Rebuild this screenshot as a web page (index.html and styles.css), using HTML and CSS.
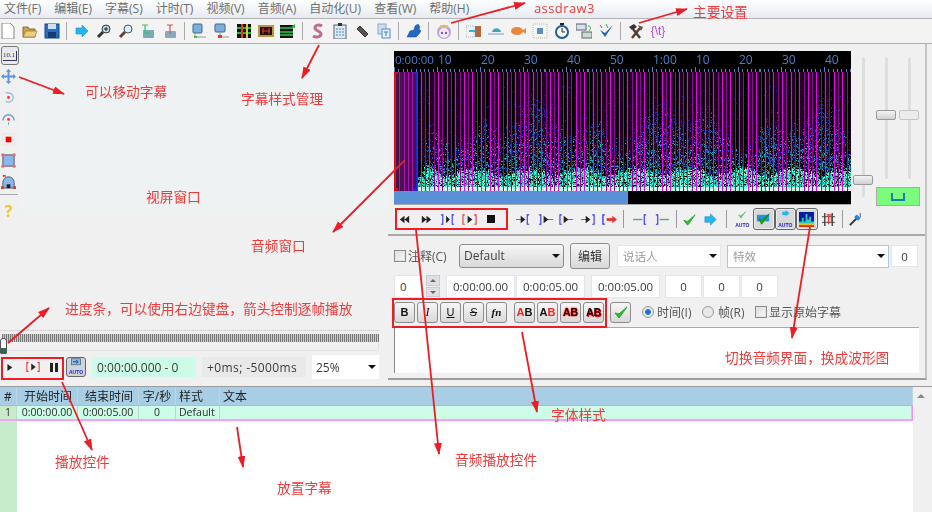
FILE: index.html
```html
<!DOCTYPE html>
<html lang="zh-CN">
<head>
<meta charset="utf-8">
<title>Aegisub</title>
<link rel="stylesheet" href="styles.css">
</head>
<body>
<svg class="defs" width="0" height="0">
  <defs>
    <symbol id="play" viewBox="0 0 16 16"><path d="M5 3l7 5-7 5z" fill="#222"/></symbol>
    <symbol id="rew" viewBox="0 0 16 16"><path d="M8 4L3 8l5 4zM13 4L8 8l5 4z" fill="#222"/></symbol>
    <symbol id="ffw" viewBox="0 0 16 16"><path d="M3 4l5 4-5 4zM8 4l5 4-5 4z" fill="#222"/></symbol>
    <symbol id="bplay" viewBox="0 0 16 16"><path d="M6 4l5 4-5 4z" fill="#222"/><path d="M3 3H1v10h2M13 3h2v10h-2" fill="none" stroke="#e33" stroke-width="1.2"/></symbol>
    <symbol id="bout" viewBox="0 0 16 16"><path d="M6.500 4l4 4-4 4z" fill="#222"/><path d="M1 3h2v10H1M15 3h-2v10h2" fill="none" stroke="#33f" stroke-width="1.200"/></symbol>
    <symbol id="ibef" viewBox="0 0 16 16"><path d="M0 8h6" stroke="#e33"/><path d="M5 4l5 4-5 4z" fill="#222"/><path d="M14 3h-2v10h2" fill="none" stroke="#33f" stroke-width="1.200"/></symbol>
    <symbol id="iaft" viewBox="0 0 16 16"><path d="M10 8h6" stroke="#e33"/><path d="M6 4l5 4-5 4z" fill="#222"/><path d="M1 3h2v10H1" fill="none" stroke="#33f" stroke-width="1.200"/></symbol>
    <symbol id="ista" viewBox="0 0 16 16"><path d="M9 8h6" stroke="#e33"/><path d="M5 4l5 4-5 4z" fill="#222"/><path d="M3 3H1v10h2" fill="none" stroke="#33f" stroke-width="1.200"/></symbol>
    <symbol id="iend" viewBox="0 0 16 16"><path d="M0 8h6" stroke="#e33"/><path d="M5 4l5 4-5 4z" fill="#222"/><path d="M12 3h2v10h-2" fill="none" stroke="#33f" stroke-width="1.200"/></symbol>
    <symbol id="iall" viewBox="0 0 16 16"><path d="M5 8h7" stroke="#e33" stroke-width="3"/><path d="M11 4l5 4-5 4z" fill="#e33"/><path d="M3 3H1v10h2" fill="none" stroke="#33f" stroke-width="1.400"/></symbol>
    <symbol id="gl" viewBox="0 0 16 16"><path d="M0 8h10" stroke="#6a6" stroke-width="1.500"/><path d="M14 3h-2v10h2" fill="none" stroke="#33f" stroke-width="1.200"/></symbol>
    <symbol id="gr" viewBox="0 0 16 16"><path d="M6 8h10" stroke="#6a6" stroke-width="1.500"/><path d="M2 3h2v10H2" fill="none" stroke="#33f" stroke-width="1.200"/></symbol>
    <symbol id="check" viewBox="0 0 16 16"><path d="M2 9l4 5 8-11-8 7z" fill="#3b3" stroke="#2a2"/></symbol>
    <symbol id="arrow" viewBox="0 0 16 16"><path d="M2 5h6V2l6 6-6 6v-3H2z" fill="#28b4ee" stroke="#1890c8" stroke-width=".6"/></symbol>
    <symbol id="zin" viewBox="0 0 16 16"><path d="M2 14l5-5" stroke="#333" stroke-width="3"/><circle cx="10" cy="6" r="4" fill="#bde" stroke="#333"/><path d="M8 6h4M10 4v4" stroke="#222"/></symbol>
    <symbol id="zout" viewBox="0 0 16 16"><path d="M2 14l5-5" stroke="#643" stroke-width="3"/><circle cx="10" cy="6" r="4" fill="#def" stroke="#456"/></symbol>
    <symbol id="jump1" viewBox="0 0 16 16"><rect x="3" y="7" width="11" height="8" rx="1" fill="#7ab"/><path d="M2 2h6M5 2v8h5" stroke="#4b6" stroke-width="1.200" fill="none"/></symbol>
    <symbol id="jump2" viewBox="0 0 16 16"><rect x="3" y="8" width="11" height="7" rx="1" fill="#8ab"/><path d="M5 2h6M8 2v9" stroke="#d55" stroke-width="1.200" fill="none"/></symbol>
    <symbol id="flow1" viewBox="0 0 16 16"><rect x="1" y="1" width="9" height="9" rx="1" fill="#7ab0dd" stroke="#468"/><path d="M3 10v4h11" stroke="#999" fill="none"/><rect x="2" y="13" width="3" height="2" fill="#3c3"/></symbol>
    <symbol id="flow2" viewBox="0 0 16 16"><rect x="1" y="1" width="10" height="8" rx="1" fill="#7ab0dd" stroke="#468"/><path d="M6 9v5h9" stroke="#999" fill="none"/><rect x="4" y="12" width="4" height="3" fill="#e33"/></symbol>
    <symbol id="film1" viewBox="0 0 16 16"><rect x="1" y="1" width="14" height="14" fill="#111"/><path d="M1 5h14M1 10h14" stroke="#2b2" stroke-width="2"/><path d="M6 1v14" stroke="#e33" stroke-width="2"/><path d="M11 1v14" stroke="#dc3" stroke-width="2"/></symbol>
    <symbol id="film2" viewBox="0 0 16 16"><rect y="2" width="16" height="12" fill="#b8983a"/><rect x="2" y="4" width="12" height="8" fill="#211"/><path d="M4 8h8M5 5v6M11 5v6" stroke="#e33"/></symbol>
    <symbol id="film3" viewBox="0 0 16 16"><rect y="2" width="13" height="13" fill="#111"/><path d="M0 5h13M0 9h13M0 12h13" stroke="#2c5" stroke-width="1.500"/><path d="M11 4l4-3v4z" fill="#3a3"/></symbol>
    <symbol id="sty" viewBox="0 0 16 16"><path d="M12 3c-3-2-7-1-7 2s6 3 6 6-5 4-8 2" fill="none" stroke="#c26a8c" stroke-width="3"/></symbol>
    <symbol id="clip" viewBox="0 0 16 16"><rect x="2" y="2" width="12" height="14" fill="#dfe9f3" stroke="#567"/><rect x="6" y="0" width="4" height="3" fill="#333"/><path d="M4 6h8M4 9h8M4 12h8" stroke="#48a" stroke-dasharray="2 1"/></symbol>
    <symbol id="tag" viewBox="0 0 16 16"><path d="M3 6l3-3 8 8-3 3z" fill="#555" stroke="#333"/></symbol>
    <symbol id="docs" viewBox="0 0 16 16"><rect x="2" y="1" width="8" height="10" fill="#cde" stroke="#8ac"/><rect x="6" y="6" width="8" height="9" fill="#def" stroke="#68b"/><path d="M8 9h4M10 9v4" stroke="#48a"/></symbol>
    <symbol id="puz" viewBox="0 0 16 16"><path d="M1 14l3-6 4-1 1-4 3-2 2 3-1 2 2 2-2 3-3 3z" fill="#2469c4" stroke="#124a90" stroke-width=".5"/></symbol>
    <symbol id="face" viewBox="0 0 16 16"><circle cx="8" cy="9" r="7" fill="#b9a2e8"/><circle cx="8" cy="10" r="5" fill="#fce8e2"/><circle cx="6" cy="10" r="1.200" fill="#66c"/><circle cx="10" cy="10" r="1.200" fill="#66c"/><path d="M4 2l4 2 4-2v3H4z" fill="#e8c23a"/></symbol>
    <symbol id="kar1" viewBox="0 0 16 16"><rect x="0" y="3" width="8" height="11" fill="none" stroke="#9bd" stroke-dasharray="1 1"/><rect x="9" y="3" width="6" height="11" fill="#b4693a"/><path d="M3 8h6" stroke="#28b4ee" stroke-width="2"/></symbol>
    <symbol id="fish1" viewBox="0 0 16 16"><path d="M0 11h16" stroke="#9bd" stroke-width="1.500"/><path d="M4 9c1-5 8-5 9 0z" fill="#3aa8b8"/></symbol>
    <symbol id="fish2" viewBox="0 0 16 16"><ellipse cx="7" cy="8" rx="6" ry="4" fill="#e8863a"/><path d="M12 8l4-3v6z" fill="#e8863a"/></symbol>
    <symbol id="sq" viewBox="0 0 16 16"><rect x="1" y="1" width="14" height="14" fill="none" stroke="#bbb" stroke-dasharray="1 1"/><rect x="5" y="5" width="6" height="6" fill="#5a8cc8"/></symbol>
    <symbol id="timer" viewBox="0 0 16 16"><circle cx="8" cy="9" r="6" fill="#fff" stroke="#1c5c9c" stroke-width="2"/><path d="M8 9V5M8 9h3" stroke="#123"/><rect x="6" y="0" width="4" height="2" fill="#222"/></symbol>
    <symbol id="trans" viewBox="0 0 16 16"><rect x="0" y="1" width="10" height="6" fill="#dde" stroke="#567"/><rect x="6" y="9" width="10" height="6" fill="#cdc" stroke="#567"/><path d="M12 3c3 0 3 3 1 5" stroke="#3a3" fill="none"/></symbol>
    <symbol id="spell" viewBox="0 0 16 16"><path d="M2 7l5 7 8-12-8 8z" fill="#1e66b8"/><path d="M2 2l2 3" stroke="#e33"/><path d="M8 1l2 4" stroke="#3a3"/></symbol>
    <symbol id="tools" viewBox="0 0 16 16"><path d="M4 15L12 5" stroke="#6b3d1c" stroke-width="2.500"/><path d="M12 15L5 6" stroke="#444" stroke-width="2.500"/><path d="M1 4l5-3 3 3-5 3z" fill="#333"/><path d="M10 2l5 2-2 4z" fill="#555"/></symbol>
    <symbol id="autochk" viewBox="0 0 16 16"><path d="M3 6l3 4 6-8-6 5z" fill="#6c6" stroke="#5a5" stroke-width=".5"/></symbol>
    <symbol id="chkblue" viewBox="0 0 16 16"><rect x="1" y="3" width="13" height="7" fill="#2f8fd8"/><path d="M3 7l3 6 8-11-8 7z" fill="#2a2" stroke="#181"/></symbol>
    <symbol id="arrauto" viewBox="0 0 16 16"><path d="M4 2h4V0l5 4-5 4V6H4z" fill="#28b4ee"/></symbol>
    <symbol id="spectrum" viewBox="0 0 16 16"><rect width="16" height="16" fill="#0a1c9c"/><path d="M0 16V10h3V6h2v4h2V2h2v6h2V5h2v5h3v6z" fill="#2ac8c0"/><rect y="12" width="16" height="4" fill="#e8c020"/><rect y="14" width="16" height="2" fill="#e03020"/></symbol>
    <symbol id="split" viewBox="0 0 16 16"><path d="M4 1v14M12 1v14" stroke="#444" stroke-width="1.500"/><path d="M1 5h14M1 11h14" stroke="#444"/><path d="M8 3v10M6 3h5v8" fill="none" stroke="#e33" stroke-width="1.300"/></symbol>
    <symbol id="mic" viewBox="0 0 16 16"><path d="M2 14l8-8" stroke="#333" stroke-width="2"/><path d="M8 4l4 4" stroke="#28d" stroke-width="4"/><path d="M13 1v5" stroke="#555"/></symbol>
    <symbol id="autob" viewBox="0 0 16 16"><rect x="2" y="1" width="12" height="8" fill="#8cc0ee" stroke="#468"/><path d="M4 5h5M8 3l3 2-3 2" stroke="#124" fill="none"/></symbol>
  </defs>
</svg>

<div class="app">
  <div class="menubar">
    <span class="menu m1">文件(F)</span><span class="menu">编辑(E)</span><span class="menu">字幕(S)</span><span class="menu">计时(T)</span><span class="menu">视频(V)</span><span class="menu">音频(A)</span><span class="menu">自动化(U)</span><span class="menu">查看(W)</span><span class="menu">帮助(H)</span>
  </div>

  <div class="toolbar">
    <span class="tb first"><svg class="ic" viewBox="0 0 16 16"><path d="M2 0h8l4 4v12H2z" fill="#fff" stroke="#888"/></svg></span>
    <span class="tb"><svg class="ic" viewBox="0 0 16 16"><path d="M1 4h5l1 2h6v8H1z" fill="#c9a34a" stroke="#8a6d2c"/><path d="M4 8h11l-2 6H1z" fill="#e9d080" stroke="#8a6d2c" stroke-width=".6"/></svg></span>
    <span class="tb"><svg class="ic" viewBox="0 0 16 16"><rect x="1" y="1" width="14" height="14" fill="#2a6ec0" stroke="#144a90"/><rect x="4" y="1" width="8" height="5" fill="#cfe0f4"/><rect x="4" y="9" width="8" height="6" fill="#123c74"/></svg></span>
    <i class="sep"></i>
    <span class="tb"><svg class="ic"><use href="#arrow"/></svg></span>
    <span class="tb"><svg class="ic"><use href="#zin"/></svg></span>
    <span class="tb"><svg class="ic"><use href="#zout"/></svg></span>
    <span class="tb"><svg class="ic"><use href="#jump1"/></svg></span>
    <span class="tb"><svg class="ic"><use href="#jump2"/></svg></span>
    <i class="sep"></i>
    <span class="tb"><svg class="ic"><use href="#flow1"/></svg></span>
    <span class="tb"><svg class="ic"><use href="#flow2"/></svg></span>
    <span class="tb"><svg class="ic"><use href="#film1"/></svg></span>
    <span class="tb"><svg class="ic"><use href="#film2"/></svg></span>
    <span class="tb"><svg class="ic"><use href="#film3"/></svg></span>
    <i class="sep"></i>
    <span class="tb"><svg class="ic"><use href="#sty"/></svg></span>
    <span class="tb"><svg class="ic"><use href="#clip"/></svg></span>
    <span class="tb"><svg class="ic"><use href="#tag"/></svg></span>
    <span class="tb"><svg class="ic"><use href="#docs"/></svg></span>
    <i class="sep"></i>
    <span class="tb"><svg class="ic"><use href="#puz"/></svg></span>
    <i class="sep"></i>
    <span class="tb"><svg class="ic"><use href="#face"/></svg></span>
    <i class="sep"></i>
    <span class="tb"><svg class="ic"><use href="#kar1"/></svg></span>
    <span class="tb"><svg class="ic"><use href="#fish1"/></svg></span>
    <span class="tb"><svg class="ic"><use href="#fish2"/></svg></span>
    <span class="tb"><svg class="ic"><use href="#sq"/></svg></span>
    <span class="tb"><svg class="ic"><use href="#timer"/></svg></span>
    <span class="tb"><svg class="ic"><use href="#trans"/></svg></span>
    <span class="tb"><svg class="ic"><use href="#spell"/></svg></span>
    <i class="sep"></i>
    <span class="tb"><svg class="ic"><use href="#tools"/></svg></span>
    <span class="tb tag-t">{\t}</span>
  </div>

  <div class="workspace">
    <section class="left">
      <div class="video-row">
        <div class="tools">
          <span class="tool pressed"><span class="ruler-txt">10.1</span></span>
          <span class="tool"><svg class="ic" viewBox="0 0 16 16"><path d="M8 0l3 3H9v4h4V5l3 3-3 3V9H9v4h2l-3 3-3-3h2V9H3v2L0 8l3-3v2h4V3H5z" fill="#5a94dc"/></svg></span>
          <span class="tool"><svg class="ic" viewBox="0 0 16 16"><path d="M5 3h3a5 5 0 1 1-3 9" fill="none" stroke="#8ab4e4" stroke-width="1.300"/><circle cx="8" cy="8" r="1.500" fill="#e33"/></svg></span>
          <span class="tool"><svg class="ic" viewBox="0 0 16 16"><path d="M2 10a6 6 0 0 1 12 0" fill="none" stroke="#6a9ad8" stroke-width="1.500"/><circle cx="8" cy="9" r="1.500" fill="#e33"/><path d="M8 12v3" stroke="#8ab"/></svg></span>
          <span class="tool"><svg class="ic" viewBox="0 0 16 16"><rect x="2" y="2" width="12" height="12" fill="none" stroke="#ddd" stroke-dasharray="1 1"/><rect x="5" y="5" width="6" height="6" fill="#f00"/></svg></span>
          <span class="tool"><svg class="ic" viewBox="0 0 16 16"><rect x="2" y="2" width="12" height="12" fill="#8ab8ec" stroke="#556"/><g fill="#f06a6a"><circle cx="2" cy="2" r="1.800"/><circle cx="14" cy="2" r="1.800"/><circle cx="2" cy="14" r="1.800"/><circle cx="14" cy="14" r="1.800"/></g></svg></span>
          <span class="tool"><svg class="ic" viewBox="0 0 16 16"><path d="M2 15V9a6 6 0 0 1 12 0v6z" fill="#8ab8ec" stroke="#456"/><rect x="6" y="11" width="4" height="4" fill="#223"/><g fill="#e33"><rect x="0" y="13" width="3" height="3"/><rect x="13" y="13" width="3" height="3"/><rect x="2" y="1" width="3" height="2"/></g></svg></span>
          <i class="tool-sep"></i>
          <span class="tool help">?</span>
        </div>
        <div class="video"></div>
      </div>
      <div class="seek">
        <div class="seek-line"></div>
        <div class="seek-ticks"></div>
        <div class="seek-track"><span class="thumb"></span></div>
      </div>
      <div class="vctrl">
        <span class="vb vplay"><svg class="ic sm"><use href="#play"/></svg></span>
        <span class="vb"><svg class="ic sm"><use href="#bplay"/></svg></span>
        <span class="vb"><span class="pause"></span></span>
        <span class="autobtn"><svg class="ic sm"><use href="#autob"/></svg><b class="auto">AUTO</b></span>
        <span class="field mint">0:00:00.000 - 0</span>
        <span class="field grey">+0ms; -5000ms</span>
        <span class="field combo zoomc">25%<i class="caret"></i></span>
      </div>
    </section>

    <section class="right">
      <div class="audio">
        <div class="audio-top">
          <div class="wave">
            <div class="timeline">
              <span class="t0">0:00:00</span><span>10</span><span>20</span><span>30</span><span>40</span><span>50</span><span>1:00</span><span>10</span><span>20</span><span>30</span><span>40</span>
            </div>
            <canvas id="spec" class="spec" width="457" height="119"></canvas>
            <div class="overview"><span class="ov-done"></span><span class="ov-rest"></span></div>
          </div>
          <div class="sliders">
            <div class="slide s1"><span class="sthumb"></span></div>
            <div class="slide-group">
              <div class="slide-pair">
                <div class="slide s2"><span class="sthumb"></span></div>
                <div class="slide s3"><span class="sthumb lite"></span></div>
              </div>
              <div class="greenbox"><span class="bracket"></span></div>
            </div>
          </div>
        </div>
        <div class="atb">
          <span class="ab"><svg class="ic"><use href="#rew"/></svg></span>
          <span class="ab"><svg class="ic"><use href="#ffw"/></svg></span>
          <span class="ab"><svg class="ic"><use href="#bout"/></svg></span>
          <span class="ab"><svg class="ic"><use href="#bplay"/></svg></span>
          <span class="ab"><span class="stop"></span></span>
          <i class="gap1"></i>
          <span class="ab"><svg class="ic"><use href="#ibef"/></svg></span>
          <span class="ab"><svg class="ic"><use href="#iaft"/></svg></span>
          <span class="ab"><svg class="ic"><use href="#ista"/></svg></span>
          <span class="ab"><svg class="ic"><use href="#iend"/></svg></span>
          <span class="ab"><svg class="ic"><use href="#iall"/></svg></span>
          <i class="vsep s12"></i>
          <span class="ab"><svg class="ic"><use href="#gl"/></svg></span>
          <span class="ab"><svg class="ic"><use href="#gr"/></svg></span>
          <i class="vsep s5"></i>
          <span class="ab"><svg class="ic"><use href="#check"/></svg></span>
          <span class="ab"><svg class="ic"><use href="#arrow"/></svg></span>
          <i class="vsep s14"></i>
          <span class="ab stack"><svg class="ic"><use href="#autochk"/></svg><b class="auto">AUTO</b></span>
          <span class="ab on"><svg class="ic"><use href="#chkblue"/></svg></span>
          <span class="ab on stack"><svg class="ic"><use href="#arrauto"/></svg><b class="auto">AUTO</b></span>
          <span class="ab on"><svg class="ic"><use href="#spectrum"/></svg></span>
          <span class="ab"><svg class="ic"><use href="#split"/></svg></span>
          <i class="vsep s5"></i>
          <span class="ab"><svg class="ic"><use href="#mic"/></svg></span>
        </div>
      </div>

      <div class="edit">
        <div class="row r1">
          <span class="check"></span><span class="lab w-note">注释(C)</span>
          <span class="dd w-style">Default<i class="caret"></i></span>
          <span class="btn w-edit">编辑</span>
          <span class="field combo w-actor ph">说话人<i class="caret"></i></span>
          <span class="field combo w-fx ph">特效<i class="caret"></i></span>
          <span class="field w-lay center">0</span>
        </div>
        <div class="row r2">
          <span class="field w-layer">0</span>
          <span class="spin"><i class="up"></i><i class="down"></i></span>
          <span class="field w-time center">0:00:00.00</span>
          <span class="field w-time center t2">0:00:05.00</span>
          <span class="field w-time center t3">0:00:05.00</span>
          <span class="field w-m center m1st">0</span>
          <span class="field w-m center">0</span>
          <span class="field w-m center">0</span>
        </div>
        <div class="row r3">
          <span class="sb bold">B</span>
          <span class="sb ital">I</span>
          <span class="sb und">U</span>
          <span class="sb strike">S</span>
          <span class="sb fn">fn</span>
          <span class="sb ab1 gapl"><em>A</em>B</span>
          <span class="sb ab1">A<em>B</em></span>
          <span class="sb ab3">AB</span>
          <span class="sb ab4">AB</span>
          <span class="sb okb"><svg class="ic"><use href="#check"/></svg></span>
          <span class="radio on"></span><span class="lab w-rt">时间(I)</span>
          <span class="radio"></span><span class="lab w-rf">帧(R)</span>
          <span class="check"></span><span class="lab">显示原始字幕</span>
        </div>
        <div class="textbox"></div>
      </div>
    </section>
  </div>

  <div class="grid">
    <div class="table">
      <div class="thead">
        <span class="c c0">#</span><span class="c c1">开始时间</span><span class="c c2">结束时间</span><span class="c c3">字/秒</span><span class="c c4">样式</span><span class="c c5">文本</span>
      </div>
      <div class="tbody">
        <span class="c c0 num">1</span><span class="c c1">0:00:00.00</span><span class="c c2">0:00:05.00</span><span class="c c3">0</span><span class="c c4">Default</span><span class="c c5"></span>
      </div>
      <div class="empty"><div class="stripe"></div></div>
    </div>
    <div class="scroll"><i class="sup"></i></div>
  </div>
</div>

<svg class="marks" viewBox="0 0 932 512" width="932" height="512">
  <defs>
    <marker id="ah" markerWidth="12" markerHeight="8" refX="11" refY="4" orient="auto" markerUnits="userSpaceOnUse"><path d="M0 0l12 4-12 4z" fill="#ee1c25"/></marker>
  </defs>
  <g fill="none" stroke="#ee1c25" stroke-width="2">
    <rect x="396" y="209" width="111" height="20"/>
    <rect x="393" y="299" width="213" height="28"/>
    <rect x="2" y="358" width="61" height="21"/>
  </g>
  <g stroke="#ee1c25" stroke-width="1.800" marker-end="url(#ah)">
    <path d="M451 23L525 3"/>
    <path d="M639 23L687 9"/>
    <path d="M19 77L64 94"/>
    <path d="M319 45L302 78"/>
    <path d="M405 160L333 232"/>
    <path d="M8 343L49 308"/>
    <path d="M62 382L92 450"/>
    <path d="M237 427L243 467"/>
    <path d="M416 230L439 454"/>
    <path d="M522 332L537 412"/>
    <path d="M810 227L792 338"/>
  </g>
</svg>
<span class="note n-ass">assdraw3</span>
<span class="note n-main">主要设置</span>
<span class="note n-move">可以移动字幕</span>
<span class="note n-style">字幕样式管理</span>
<span class="note n-video">视屏窗口</span>
<span class="note n-audio">音频窗口</span>
<span class="note n-seek">进度条，可以使用右边键盘，箭头控制逐帧播放</span>
<span class="note n-switch">切换音频界面，换成波形图</span>
<span class="note n-font">字体样式</span>
<span class="note n-play">播放控件</span>
<span class="note n-aplay">音频播放控件</span>
<span class="note n-place">放置字幕</span>
<script src="script.js"></script>
</body>
</html>
```
FILE: styles.css
```css
* { box-sizing: border-box; }
html, body { margin: 0; padding: 0; }
body {
  position: relative;
  width: 932px;
  height: 512px;
  overflow: hidden;
  background: #f0f0f0;
  font-family: "Open Sans", "Noto Sans CJK SC", sans-serif;
  font-size: 12px;
  color: #333;
}
.defs { position: absolute; }
.app { width: 932px; height: 512px; display: flex; flex-direction: column; filter: blur(.4px); }
.ic { width: 16px; height: 16px; display: block; flex: none; }
.ic.sm { width: 14px; height: 14px; }
i { font-style: normal; display: block; }

.menubar {
  height: 19px; flex: none; display: flex; align-items: center; padding-left: 4px; gap: 13px;
  background: linear-gradient(#fdfeff, #e6ebf2);
  border-bottom: 1px solid #b4b4b4;
  color: #6e6e6e; white-space: nowrap;
}
.menu { line-height: 18px; }

.toolbar {
  height: 25px; flex: none; display: flex; align-items: center;
  background: #f3f3f3; border-bottom: 1px solid #b0b0b0;
}
.tb { width: 22px; height: 22px; display: flex; align-items: center; justify-content: center; flex: none; }
.tb.first { width: 16px; margin-right: 3px; }
.sep { width: 8px; height: 18px; flex: none; position: relative; }
.sep::after { content: ""; position: absolute; left: 3px; top: 0; width: 1px; height: 18px; background: #a8a8a8; }
.tag-t { color: #b44cf0; font-size: 12px; font-family: "Liberation Sans", sans-serif; }

.workspace { height: 342px; flex: none; display: flex; }
.left { width: 388px; flex: none; display: flex; flex-direction: column; }
.video-row { height: 286px; flex: none; display: flex; }
.tools { width: 20px; flex: none; display: flex; flex-direction: column; align-items: flex-start; padding-top: 2px; }
.tool { width: 17px; height: 21px; display: flex; align-items: center; justify-content: center; flex: none; }
.tool .ic { width: 15px; height: 15px; }
.tool.pressed { width: 18px; height: 19px; margin: 0 0 1px 1px; border: 1px solid #777; border-radius: 3px; background: #e9e9e9; }
.ruler-txt { font: 7px "Liberation Serif", serif; color: #334; border-bottom: 1px solid #336; border-right: 1px solid #336; padding: 0 1px 1px 0; }
.tool-sep { width: 18px; height: 1px; background: #aaa; margin: 2px 0 5px; }
.help { color: #e8c832; font: 700 16px "Open Sans", sans-serif; }
.video { flex: 1; height: 170px; background: #eff2f2; }

.seek { height: 24px; flex: none; padding: 0 8px 0 0; position: relative; }
.seek-line { height: 1px; background: #d8d8d8; }
.seek-ticks {
  height: 8px; margin: 3px 0 0 2px; width: 377px;
  background: repeating-linear-gradient(90deg, #777 0 1px, #ccc 1px 2px);
}
.seek-track { height: 9px; width: 379px; border: 1px solid #e2e2e2; border-top: 0; border-radius: 0 0 2px 2px; }
.thumb {
  position: absolute; left: 0; top: 8px; width: 7px; height: 16px;
  background: linear-gradient(#fff 0 62%, #2c6a58 62%); border: 1px solid #555; border-radius: 3px 3px 1px 1px;
}

.vctrl { height: 32px; flex: none; display: flex; align-items: center; padding-bottom: 6px; }
.vb { width: 21px; height: 20px; display: flex; align-items: center; justify-content: center; flex: none; }
.vplay { margin-left: 1px; margin-right: 0; justify-content: flex-start; padding-left: 3px; }
.vplay .ic.sm { width: 11px; height: 11px; }
.pause { width: 8px; height: 9px; border-left: 3px solid #222; border-right: 3px solid #222; }
.autobtn {
  width: 20px; height: 20px; flex: none; margin-left: 2px; border: 1px solid #666; border-radius: 3px; background: #cfd4da;
  display: flex; flex-direction: column; align-items: center;
}
.auto { font: 700 5px/5px "Liberation Sans", sans-serif; color: #22c; }
.autobtn .ic { height: 12px; }
.field {
  background: #fff; border: 1px solid #e2e6ea; height: 22px; display: flex; align-items: center;
  padding: 0 5px; flex: none; font-size: 11.500px; white-space: nowrap; position: relative; color: #3a3a3a;
}
.center { justify-content: center; padding: 0; }
.mint { width: 104px; height: 20px; margin-left: 6px; background: #ccfce8; border: 0; font-size: 12px; }
.grey { width: 104px; height: 20px; margin-left: 6px; background: #e9e9e9; border: 0; font-size: 12px; letter-spacing: .4px; }
.zoomc { width: 67px; height: 24px; margin-left: 6px; border: 0; padding-left: 4px; font-size: 12px; }
.caret { position: absolute; right: 3px; top: 50%; margin-top: -2px; width: 0; height: 0; border: 4px solid transparent; border-top: 4px solid #111; border-bottom: 0; }

.right { width: 539px; flex: none; display: flex; flex-direction: column; border-right: 2px solid #c4c4c4; height: 336px; border-bottom: 2px solid #9c9c9c; }
.audio { height: 192px; flex: none; padding: 7px 0 0 6px; border-bottom: 2px solid #a8a8a8; }
.audio-top { display: flex; height: 155px; }
.wave { width: 457px; flex: none; display: flex; flex-direction: column; }
.timeline {
  height: 21px; flex: none; background-color: #000; display: flex; overflow: hidden; color: #4a80c8; font-size: 12px; line-height: 18px;
  background-image:
    repeating-linear-gradient(90deg, #4a80c8 0 1px, transparent 1px 43px),
    repeating-linear-gradient(90deg, #4a80c8 0 1px, transparent 1px 4.300px);
  background-size: 100% 5px, 100% 3px;
  background-position: 0 100%, 0 100%;
  background-repeat: no-repeat;
}
.timeline span { width: 43px; flex: none; padding-left: 1px; }
.timeline .t0 { font-size: 11.500px; }
.spec { width: 457px; height: 119px; display: block; flex: none; }
.overview { height: 14px; flex: none; display: flex; border-bottom: 1px solid #aaa; }
.ov-done { width: 234px; background: #5a90d8; }
.ov-rest { flex: 1; background: #000; }

.sliders { flex: 1; display: flex; padding-left: 2px; position: relative; }
.slide { position: relative; width: 20px; }
.slide::before { content: ""; position: absolute; left: 9px; top: 0; bottom: 0; width: 3px; background: #dedede; border-radius: 2px; }
.s1 { height: 140px; margin-top: 6px; }
.slide-group { margin-left: 3px; width: 43px; display: flex; flex-direction: column; margin-top: 6px; }
.slide-pair { display: flex; gap: 3px; height: 122px; }
.sthumb { position: absolute; left: 0; width: 20px; height: 10px; border: 1px solid #999; border-radius: 2px; background: linear-gradient(#f4f4f4, #d0d0d0); }
.s1 .sthumb { top: 118px; }
.s2 .sthumb, .s3 .sthumb { top: 53px; }
.sthumb.lite { background: #ececec; border-color: #c4c4c4; }
.greenbox { margin: 8px 0 0; height: 19px; width: 44px; background: #7cfc7c; border: 1px solid #aaa; display: flex; align-items: center; justify-content: center; }
.bracket { width: 14px; height: 8px; border: 2px solid #1c7cb8; border-top: 0; }

.atb { display: flex; align-items: center; height: 25px; padding-top: 1px; }
.ab { width: 21.500px; height: 22px; display: flex; align-items: center; justify-content: center; flex: none; }
.ab .ic { width: 15px; height: 15px; }
.ab.stack { flex-direction: column; }
.ab.stack .ic { height: 13px; }
.ab.on { border: 1px solid #666; border-radius: 3px; background: #d6d8da; box-shadow: inset 0 0 0 1px #eee; }
.stop { width: 8px; height: 8px; background: #111; }
.gap1 { width: 11.500px; flex: none; }
.vsep { height: 18px; width: 1px; background: #999; flex: none; }
.s12 { margin: 0 6px 0 2px; }
.s5 { margin: 0 2px 0 3px; }
.s14 { margin: 0 5px 0 4px; }

.edit { padding: 7px 0 0 6px; flex: 1; display: flex; flex-direction: column; }
.row { display: flex; align-items: center; }
.r1 { height: 26px; }
.check { width: 12px; height: 12px; border: 1px solid #8a8a8a; background: linear-gradient(135deg, #ddd, #f8f8f8); flex: none; box-shadow: inset 0 0 0 1px #e4e4e4; }
.lab { margin-left: 2px; white-space: nowrap; color: #555; flex: none; }
.w-note { width: 51px; }
.dd {
  width: 105px; height: 24px; flex: none; border: 1px solid #8c8c8c; border-radius: 3px; position: relative;
  background: linear-gradient(#f6f6f6, #d9d9d9); padding-left: 4px; line-height: 22px; color: #444;
}
.btn {
  width: 40px; height: 26px; margin-left: 6px; flex: none; border: 1px solid #8c8c8c; border-radius: 3px;
  background: linear-gradient(#f6f6f6, #d8d8d8); display: flex; align-items: center; justify-content: center; color: #333;
}
.w-actor { width: 104px; margin-left: 7px; }
.w-fx { width: 162px; margin-left: 6px; border-color: #a8c8e8; height: 23px; }
.w-lay { width: 27px; margin-left: 2px; }
.ph { color: #999; }
.r2 { margin-top: 5px; height: 24px; }
.w-layer { width: 29px; height: 23px; }
.spin { width: 14px; height: 22px; margin-left: 3px; margin-right: 6px; display: flex; flex-direction: column; gap: 1px; flex: none; }
.spin i { flex: 1; background: #e0e0e4; border: 1px solid #ccc; position: relative; }
.spin i::after { content: ""; position: absolute; left: 3px; top: 3px; border: 3px solid transparent; }
.up::after { border-bottom: 3px solid #667 !important; border-top: 0 !important; }
.down::after { border-top: 3px solid #667 !important; border-bottom: 0 !important; }
.w-time { width: 69px; height: 23px; font-size: 11.500px; }
.t2 { margin-left: 1px; }
.t3 { margin-left: 6px; }
.w-m { width: 37px; height: 23px; margin-left: 1px; }
.m1st { margin-left: 5px; }
.r3 { margin-top: 3px; height: 22px; }
.sb {
  width: 21px; height: 21px; margin-right: 2px; flex: none; border: 1px solid #8c8c8c; border-radius: 3px;
  background: linear-gradient(#f6f6f6, #d8d8d8); display: flex; align-items: center; justify-content: center;
  font: 700 11px "Liberation Sans", sans-serif; color: #111;
}
.ital { font: italic 400 12px "Liberation Serif", serif; }
.und { font-weight: 400; text-decoration: underline; }
.strike { font-weight: 400; font-style: italic; text-decoration: line-through; }
.fn { font: italic 700 11px "Liberation Serif", serif; }
.sb em { color: #f22; font-style: normal; }
.gapl { margin-left: 5px; }
.ab3 { color: #300; text-shadow: 0 0 2px #f00, 0 0 1px #f00; font-size: 10.500px; }
.ab4 { color: #200; text-shadow: 1px 1px 0 #f00; font-size: 10.500px; }
.okb { margin-left: 4px; margin-right: 11px; }
.radio { width: 12px; height: 12px; border-radius: 50%; border: 1px solid #999; background: #e8e8e8; flex: none; }
.radio.on { background: radial-gradient(circle, #1c74c8 0 35%, #dfe8ee 45%); }
.w-rt { width: 45px; margin-left: 3px; }
.w-rf { width: 37px; margin-left: 4px; }
.textbox { margin-top: 4px; width: 525px; height: 46px; background: #fff; border-top: 1px solid #aaa; border-left: 1px solid #888; flex: none; }

.grid { flex: 1; display: flex; border-top: 1px solid #9c9c9c; min-height: 0; background: #fff; }
.table { width: 913px; flex: none; display: flex; flex-direction: column; }
.thead, .tbody { display: grid; grid-template-columns: 17px 61px 61px 37px 44px 1fr; flex: none; }
.thead { height: 18px; background: #a8cee6; color: #222; }
.thead .c { border-right: 1px solid #bcd6e6; }
.thead .c5 { justify-content: flex-start; padding-left: 3px; }
.thead .c1, .thead .c2 { padding-left: 2px; }
.tbody { height: 16px; background: #cdfde8; border-top: 1px solid #f090f0; border-right: 1px solid #f090f0; border-bottom: 2px solid #f8a0f8; font-size: 10.500px; color: #2a2a2a; }
.tbody .c { border-right: 1px solid #bdd8c8; line-height: 13px; }
.c { display: flex; align-items: center; justify-content: center; white-space: nowrap; overflow: hidden; }
.c4 { justify-content: flex-start; padding-left: 3px; }
.num { background: #c8ecc9; }
.empty { flex: 1; }
.stripe { width: 17px; height: 100%; background: #c6ecc9; }
.scroll { flex: 1; background: #f0f0f0; position: relative; }
.sup { position: absolute; left: 4px; top: 7px; border: 4px solid transparent; border-bottom: 4px solid #888; border-top: 0; }

.marks { position: absolute; left: 0; top: 0; pointer-events: none; filter: blur(.3px); }
.note { position: absolute; color: #f23a3a; font-family: "Noto Sans CJK SC", sans-serif; font-size: 13.700px; line-height: 16px; white-space: nowrap; filter: blur(.25px); }
.n-ass { left: 534px; top: 1px; font-size: 13px; line-height: 15px; letter-spacing: .4px; font-family: "Open Sans", sans-serif; }
.n-main { left: 693px; top: 3px; }
.n-move { left: 85px; top: 83px; }
.n-style { left: 241px; top: 90px; }
.n-video { left: 146px; top: 188px; }
.n-audio { left: 251px; top: 237px; }
.n-seek { left: 65px; top: 300px; }
.n-switch { left: 725px; top: 349px; }
.n-font { left: 551px; top: 406px; }
.n-play { left: 55px; top: 453px; }
.n-aplay { left: 455px; top: 451px; }
.n-place { left: 277px; top: 479px; }
```
FILE: script.js
```js
(function () {
  var c = document.getElementById('spec');
  var g = c.getContext('2d');
  var W = c.width, H = c.height;
  var seed = 12345;
  function rnd() { seed = (seed * 1664525 + 1013904223) >>> 0; return seed / 4294967296; }
  g.fillStyle = '#000';
  g.fillRect(0, 0, W, H);

  var SEL = 22;
  var step = 4.3, i, x, y;
  // tinted bands between keyframes, strongest near the top
  for (i = 0; i * step < W; i++) {
    x = Math.round(i * step);
    if (i % 2 === 0) { g.fillStyle = '#260026'; g.fillRect(x, 0, Math.ceil(step), H - 30); }
  }
  // selection
  g.fillStyle = '#4a1050';
  g.fillRect(1, 0, SEL, H);

  // noise
  var envelope = [], low = [];
  for (x = 0; x < W; x++) {
    var base = 0.5 + 0.3 * Math.sin(x / 31) * Math.sin(x / 13) + 0.25 * rnd();
    if (x < 40) base *= Math.max(0, (x - 22) / 18);
    envelope[x] = Math.max(0, base);
    low[x] = 6 + 9 * Math.abs(Math.sin(x / 17)) + 5 * rnd();
    if (x < 30) low[x] *= 0.5;
  }
  var ramp = ['#1a1c70', '#20309a', '#1c6c9c', '#20b0a8', '#30e0b8', '#90ffd8', '#ffffff'];
  for (x = SEL + 1; x < W; x++) {
    var top = 105 * envelope[x];
    for (y = H - 1; y > 10; y--) {
      var dist = H - y;
      var p, lvl;
      if (dist < 5) { p = 1; lvl = 5.2 + rnd() * 1.8; }
      else if (dist < 5 + low[x]) { p = 0.8; lvl = 2.8 + rnd() * 3; }
      else if (dist < top) { p = 0.5 * (1 - dist / (top + 10)) + 0.1; lvl = rnd() * 4.5 * (1 - dist / 130) + 0.5; }
      else { p = 0.02; lvl = rnd() * 1.2; }
      if (rnd() < p) {
        g.fillStyle = ramp[Math.min(6, Math.floor(lvl))];
        g.fillRect(x, y, 1, 1);
      }
    }
  }
  // keyframe lines
  for (i = 0; i * step < W; i++) {
    x = Math.round(i * step) + 1;
    if (x <= SEL) g.fillStyle = '#a818b0';
    else g.fillStyle = i % 2 === 0 ? '#f000f0' : '#9c00a4';
    g.fillRect(x, 0, 1, H);
  }
  // cursor lines
  g.fillStyle = '#d01010'; g.fillRect(0, 0, 1, H);
  g.fillRect(1, 0, 3, 2); g.fillRect(1, H - 3, 3, 3);
  g.fillStyle = '#2020e0'; g.fillRect(22, 0, 1, H);
  g.fillRect(19, 0, 3, 2); g.fillRect(19, H - 3, 3, 3);
})();
```
